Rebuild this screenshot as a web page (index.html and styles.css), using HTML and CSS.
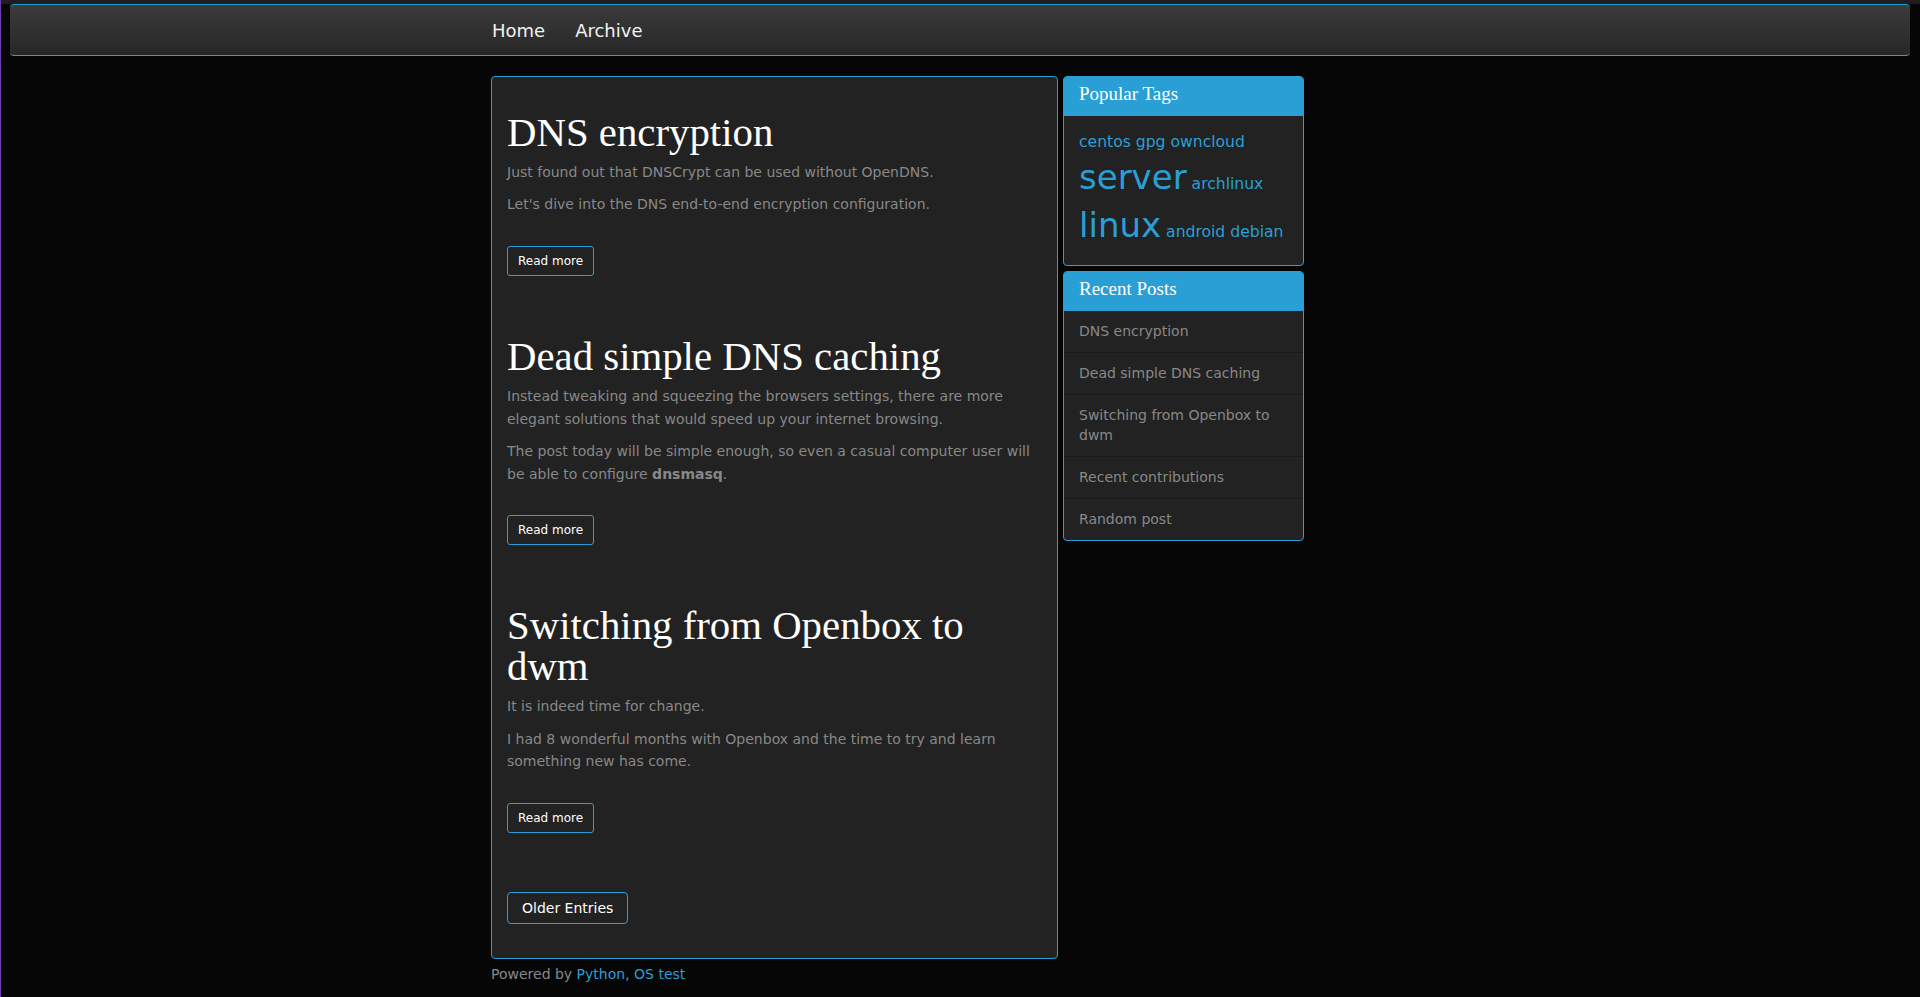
FILE: index.html
```html
<!DOCTYPE html>
<html lang="en">
<head>
<meta charset="utf-8">
<title>Blog</title>
<link rel="stylesheet" href="styles.css">
</head>
<body>
<div class="topstrip"></div>
<nav class="navbar">
  <div class="container nav-inner">
    <a class="nav-link" href="#">Home</a>
    <a class="nav-link" href="#">Archive</a>
  </div>
</nav>
<div class="container layout">
  <main class="main-box">
    <article class="post">
      <h1 class="post-title">DNS encryption</h1>
      <p>Just found out that DNSCrypt can be used without OpenDNS.</p>
      <p>Let's dive into the DNS end-to-end encryption configuration.</p>
      <div class="readmore"><a class="btn btn-sm" href="#">Read more</a></div>
    </article>
    <article class="post">
      <h1 class="post-title">Dead simple DNS caching</h1>
      <p>Instead tweaking and squeezing the browsers settings, there are more elegant solutions that would speed up your internet browsing.</p>
      <p>The post today will be simple enough, so even a casual computer user will be able to configure <strong>dnsmasq</strong>.</p>
      <div class="readmore"><a class="btn btn-sm" href="#">Read more</a></div>
    </article>
    <article class="post">
      <h1 class="post-title">Switching from Openbox to dwm</h1>
      <p>It is indeed time for change.</p>
      <p>I had 8 wonderful months with Openbox and the time to try and learn something new has come.</p>
      <div class="readmore"><a class="btn btn-sm" href="#">Read more</a></div>
    </article>
    <div class="pager"><a class="btn" href="#">Older Entries</a></div>
  </main>
  <aside class="sidebar">
    <section class="panel">
      <div class="panel-heading"><h3 class="panel-title">Popular Tags</h3></div>
      <div class="panel-body tags">
        <a class="tag" href="#">centos</a> <a class="tag" href="#">gpg</a> <a class="tag" href="#">owncloud</a> <a class="tag tag-lg" href="#">server</a> <a class="tag" href="#">archlinux</a> <a class="tag tag-lg" href="#">linux</a> <a class="tag" href="#">android</a> <a class="tag" href="#">debian</a>
      </div>
    </section>
    <section class="panel">
      <div class="panel-heading"><h3 class="panel-title">Recent Posts</h3></div>
      <div class="list-group">
        <a class="list-item" href="#">DNS encryption</a>
        <a class="list-item" href="#">Dead simple DNS caching</a>
        <a class="list-item" href="#">Switching from Openbox to dwm</a>
        <a class="list-item" href="#">Recent contributions</a>
        <a class="list-item" href="#">Random post</a>
      </div>
    </section>
  </aside>
</div>
<footer class="container footer">Powered by <a class="link" href="#">Python</a><span class="link">, </span><a class="link" href="#">OS test</a></footer>
</body>
</html>
```

FILE: styles.css
```css
html {
  background: linear-gradient(to right, #6b3da6 0, #6b3da6 1px, #060606 1px);
}

body {
  margin: 0;
  font-family: "DejaVu Sans", sans-serif;
  font-size: 14px;
  line-height: 20px;
  color: #888;
}

.topstrip {
  height: 4px;
  margin-left: 1px;
  background: #1e1e1e;
}

.navbar {
  margin: 0 10px;
  height: 50px;
  border-top: 1px solid #2a9fd6;
  border-bottom: 1px solid #2a9fd6;
  border-radius: 4px;
  background: linear-gradient(#3b3b3b, #272727);
}

.container {
  width: 938px;
  margin: 0 auto;
}

.nav-inner {
  display: flex;
  align-items: center;
  gap: 30px;
  height: 50px;
  padding: 2px 0 0 1px;
  box-sizing: border-box;
}

.nav-link {
  color: #f2f2f2;
  text-decoration: none;
  font-size: 18px;
  line-height: 20px;
}

.layout {
  display: grid;
  grid-template-columns: 567px 241px;
  column-gap: 5px;
  align-items: start;
  margin-top: 20px;
}

.main-box {
  background: #222;
  border: 1px solid #2a9fd6;
  border-radius: 4px;
  padding: 13px 15px 34.5px;
}

.post {
  padding-top: 20px;
  margin-bottom: 38.5px;
}

.post-title {
  margin: 0 0 8px;
  padding-top: 2px;
  font-family: "Liberation Serif", serif;
  font-weight: normal;
  font-size: 40.8px;
  line-height: 41px;
  color: #fff;
}

.post p {
  margin: 0 0 10px;
  line-height: 22.4px;
}

.readmore {
  display: flex;
  margin-top: 30px;
}

.btn {
  display: inline-block;
  border: 1px solid #2a9fd6;
  border-radius: 4px;
  background: #222;
  color: #fff;
  text-decoration: none;
  font-size: 14px;
  line-height: 20px;
  padding: 5px 14px;
}

.btn-sm {
  font-size: 12px;
  line-height: 18px;
  padding: 5px 10px;
  border-radius: 3px;
}

.pager {
  display: flex;
  margin-top: 59px;
}

.panel {
  border: 1px solid #2a9fd6;
  border-radius: 4px;
  background: #222;
  margin-bottom: 5px;
  overflow: hidden;
}

.panel-heading {
  background: #2a9fd6;
  padding: 8px 15px 11px;
  border-bottom: 1px solid #2a9fd6;
}

.panel-title {
  margin: 0;
  font-family: "Liberation Serif", serif;
  font-weight: normal;
  font-size: 19px;
  line-height: 18.6px;
  color: #fff;
}

.tags {
  padding: 15px;
  font-size: 15.6px;
  line-height: 1.42857;
}

.tag {
  color: #2a9fd6;
  text-decoration: none;
}

.tag-lg {
  font-size: 34px;
}

.list-item {
  display: block;
  padding: 10px 15px 11px;
  border-top: 1px solid #1a1a1a;
  color: #888;
  text-decoration: none;
  line-height: 20px;
}

.list-item:first-child {
  border-top: 0;
}

.footer {
  margin-top: 5px;
  line-height: 20px;
}

.link {
  color: #2a9fd6;
  text-decoration: none;
}
```
